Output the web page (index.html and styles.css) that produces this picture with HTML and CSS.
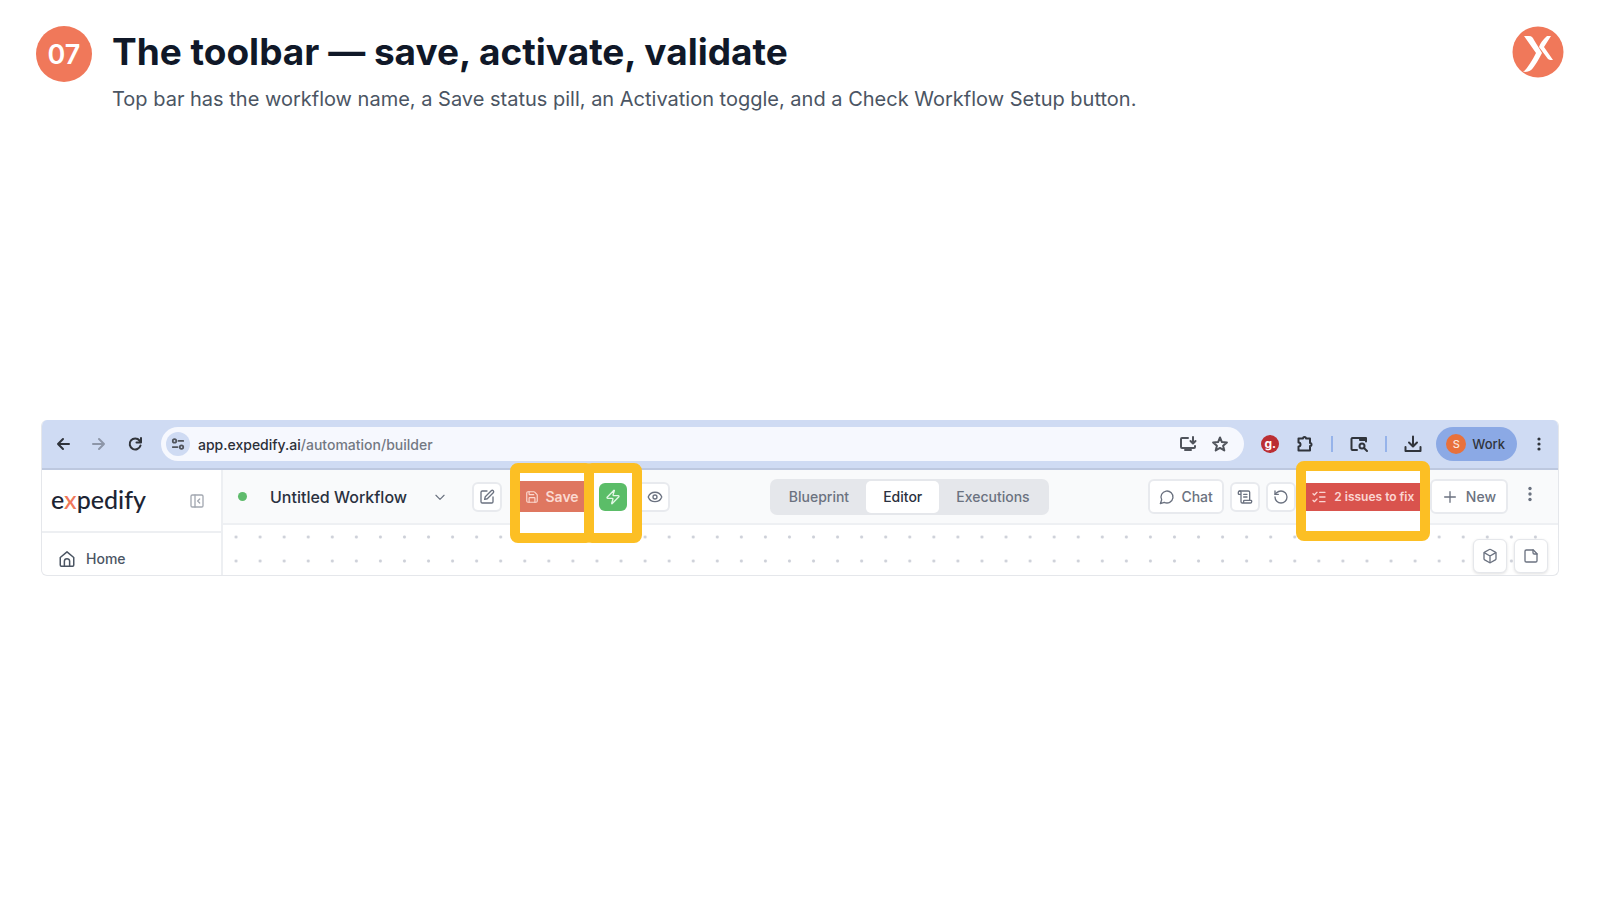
FILE: index.html
```html
<!DOCTYPE html>
<html lang="en">
<head>
  <meta charset="UTF-8">
  <meta name="viewport" content="width=device-width, initial-scale=1.0">
  <title>The toolbar — save, activate, validate</title>
  <link rel="stylesheet" href="styles.css">
</head>
<body>
  <div class="slide">
    <header class="slide-header">
      <div class="step">07</div>
      <div class="heading">
        <h1>The toolbar — save, activate, validate</h1>
        <p>Top bar has the workflow name, a Save status pill, an Activation toggle, and a Check Workflow Setup button.</p>
      </div>
      <svg class="brand" viewBox="0 0 52 52" role="img" aria-label="Expedify">
        <circle cx="26" cy="26" r="25.5" fill="#f0785a"/>
        <path d="M12 10h5c3 0 4 2 5 4l8 13c-3 6-6 11-9 15-2 3-5 4-10 4 4-3 9-11 13-19z" fill="#fff"/>
        <path d="M39 10h-4c-4 4-7 7-8 11l9 12c1 1 3 1 5 1l-9-13z" fill="#fff"/>
      </svg>
    </header>

    <main class="browser">
      <!-- Browser chrome -->
      <div class="chrome">
        <nav class="nav-buttons">
          <button aria-label="Back"><svg viewBox="0 0 16 16"><path d="M14 8H3M8 3L3 8l5 5"/></svg></button>
          <button class="muted" aria-label="Forward"><svg viewBox="0 0 16 16"><path d="M2 8h11M8 3l5 5-5 5"/></svg></button>
          <button aria-label="Reload"><svg viewBox="0 0 16 16"><path d="M13.500 9.500A5.500 5.500 0 1 1 12.500 4.500L13.500 6M14 2v4.500H9.500"/></svg></button>
        </nav>
        <div class="address">
          <button class="site-info" aria-label="Site information"><svg viewBox="0 0 16 16"><circle cx="4" cy="4.500" r="2"/><path d="M8.500 4.500H14M2 11.500h5.500"/><circle cx="12" cy="11.500" r="2"/></svg></button>
          <a class="url" href="#">app.expedify.ai<span>/automation/builder</span></a>
          <button aria-label="Install app"><svg viewBox="0 0 18 18"><path d="M9 3H3a1 1 0 0 0-1 1v8a1 1 0 0 0 1 1h12a1 1 0 0 0 1-1v-1M14 2v6M11.500 6l2.500 2.500L16.500 6"/><path d="M6 15h6"/></svg></button>
          <button aria-label="Bookmark"><svg viewBox="0 0 18 18"><path d="M9 2.500l1.900 4.600 5 .4-3.800 3.200 1.200 4.800L9 12.900l-4.300 2.600 1.200-4.800-3.800-3.200 5-.4z"/></svg></button>
        </div>
        <div class="extensions">
          <button class="ext-g" aria-label="g extension">g.</button>
          <button aria-label="Extensions"><svg viewBox="0 0 18 18"><path d="M2.500 3.500h4.500a1.500 1.500 0 0 1 3 0h4v4.500a1.500 1.500 0 0 1 0 3v4.500H2.500v-4a2 2 0 0 0 0-4z"/></svg></button>
          <span class="divider"></span>
          <button aria-label="Search tabs"><svg viewBox="0 0 18 18"><path d="M7 15H2.500a1 1 0 0 1-1-1V4a1 1 0 0 1 1-1H16v3.500M10 4h6"/><path d="M10 5h6"/><circle cx="12" cy="11" r="2.500"/><path d="M14 13l3 3"/></svg></button>
          <span class="divider"></span>
          <button aria-label="Downloads"><svg viewBox="0 0 18 18"><path d="M9 1.500v9.500M5 7.500l4 4 4-4M1.500 12v4h15v-4"/></svg></button>
        </div>
        <button class="profile"><span class="avatar">S</span>Work</button>
        <button class="kebab" aria-label="Browser menu"><svg viewBox="0 0 16 16"><circle cx="8" cy="3" r="1.600"/><circle cx="8" cy="8" r="1.600"/><circle cx="8" cy="13" r="1.600"/></svg></button>
      </div>

      <!-- App -->
      <div class="app">
        <aside class="sidebar">
          <div class="sidebar-top">
            <a class="logo" href="#">e<span>x</span>pedify</a>
            <button aria-label="Collapse sidebar"><svg viewBox="0 0 24 24"><rect x="3" y="3" width="18" height="18" rx="2"/><path d="M9 3v18M16 15l-3-3 3-3"/></svg></button>
          </div>
          <a class="menu-item" href="#">
            <svg viewBox="0 0 24 24"><path d="M3 10l9-7.500L21 10v10a1.500 1.500 0 0 1-1.500 1.500h-15A1.500 1.500 0 0 1 3 20z"/><path d="M8.500 21v-6a3.500 3.500 0 0 1 7 0v6"/></svg>
            Home
          </a>
        </aside>

        <section class="workspace">
          <div class="toolbar">
            <div class="group group-left">
              <span class="status"></span>
              <span class="name">Untitled Workflow</span>
              <button class="chevron" aria-label="Switch workflow"><svg viewBox="0 0 24 24"><path d="M5 9l7 7 7-7"/></svg></button>
              <button class="btn icon" aria-label="Rename"><svg viewBox="0 0 24 24"><path d="M12 3H5a2 2 0 0 0-2 2v14a2 2 0 0 0 2 2h14a2 2 0 0 0 2-2v-7"/><path d="M18.400 2.600a2.100 2.100 0 0 1 3 3L12.400 14.600l-4 1 1-4z"/></svg></button>
              <div class="highlight highlight-save">
                <button class="save"><svg viewBox="0 0 24 24"><path d="M15.200 3a2 2 0 0 1 1.400.6l3.800 3.800a2 2 0 0 1 .6 1.400V19a2 2 0 0 1-2 2H5a2 2 0 0 1-2-2V5a2 2 0 0 1 2-2z"/><path d="M17 21v-7a1 1 0 0 0-1-1H8a1 1 0 0 0-1 1v7M7 3v4a1 1 0 0 0 1 1h7"/></svg>Save</button>
              </div>
              <div class="highlight highlight-activate">
                <button class="activate" aria-label="Activate"><svg viewBox="0 0 24 24"><path d="M4 14a1 1 0 0 1-.8-1.600l9.900-10.200a.5.5 0 0 1 .9.500l-1.900 6A1 1 0 0 0 13 10h7a1 1 0 0 1 .8 1.600l-9.900 10.200a.5.5 0 0 1-.9-.5l1.900-6A1 1 0 0 0 11 14z"/></svg></button>
              </div>
              <button class="btn preview" aria-label="Preview"><svg viewBox="0 0 24 24"><path d="M2 12.300a1 1 0 0 1 0-.7 10.800 10.800 0 0 1 20 0 1 1 0 0 1 0 .7 10.800 10.800 0 0 1-20 0"/><circle cx="12" cy="12" r="3"/></svg></button>
            </div>

            <div class="tabs">
              <button>Blueprint</button>
              <button class="active">Editor</button>
              <button>Executions</button>
            </div>

            <div class="group group-right">
              <button class="btn labelled chat"><svg viewBox="0 0 24 24"><path d="M7.900 20A9 9 0 1 0 4 16.100L2 22z"/></svg>Chat</button>
              <button class="btn icon" aria-label="Logs"><svg viewBox="0 0 24 24"><path d="M15 12h-5M15 8h-5M19 17V5a2 2 0 0 0-2-2H4"/><path d="M8 21h12a2 2 0 0 0 2-2v-1a1 1 0 0 0-1-1H11a1 1 0 0 0-1 1v1a2 2 0 1 1-4 0V5a2 2 0 1 0-4 0v2a1 1 0 0 0 1 1h3"/></svg></button>
              <button class="btn icon" aria-label="History"><svg viewBox="0 0 24 24"><path d="M3 12a9 9 0 1 0 9-9 9.700 9.700 0 0 0-6.700 2.700L3 8"/><path d="M3 3v5h5"/></svg></button>
              <div class="highlight highlight-issues">
                <button class="issues"><svg viewBox="0 0 24 24"><path d="M13 5h8M13 12h8M13 19h8M3 17l2 2 4-4M3 7l2 2 4-4"/></svg>2 issues to fix</button>
              </div>
              <button class="btn labelled"><svg viewBox="0 0 24 24"><path d="M4 12h16M12 4v16"/></svg>New</button>
              <button class="kebab more" aria-label="More"><svg viewBox="0 0 16 16"><circle cx="8" cy="2.500" r="1.700"/><circle cx="8" cy="8" r="1.700"/><circle cx="8" cy="13.500" r="1.700"/></svg></button>
            </div>
          </div>

          <div class="canvas">
            <button class="tool" aria-label="Nodes"><svg viewBox="0 0 24 24"><path d="M21 8a2 2 0 0 0-1-1.700l-7-4a2 2 0 0 0-2 0l-7 4A2 2 0 0 0 3 8v8a2 2 0 0 0 1 1.700l7 4a2 2 0 0 0 2 0l7-4a2 2 0 0 0 1-1.700z"/><path d="M3.300 7l8.700 5 8.700-5M12 22V12"/></svg></button>
            <button class="tool" aria-label="Add note"><svg viewBox="0 0 24 24"><path d="M15.500 3H5a2 2 0 0 0-2 2v14a2 2 0 0 0 2 2h14a2 2 0 0 0 2-2V8.500z"/><path d="M15 3v4a2 2 0 0 0 2 2h4"/></svg></button>
          </div>
        </section>
      </div>
    </main>
  </div>
</body>
</html>
```

FILE: styles.css
```css
:root {
  --ink: #101828;
  --text: #4b5563;
  --icon: #6b7280;
  --border: #e5e7eb;
  --brand: #f0785a;
  --highlight: #fcbf24;
  --chrome: #cfdbf3;
}

* {
  box-sizing: border-box;
}

body {
  margin: 0;
  background: #fff;
  color: var(--ink);
  font-family: Inter, "Liberation Sans", sans-serif;
}

button {
  display: flex;
  align-items: center;
  justify-content: center;
  flex-shrink: 0;
  margin: 0;
  padding: 0;
  border: none;
  background: none;
  color: inherit;
  font: inherit;
  cursor: pointer;
}

a {
  color: inherit;
  text-decoration: none;
}

svg {
  display: block;
  flex-shrink: 0;
  width: 16px;
  height: 16px;
  fill: none;
  stroke: currentColor;
  stroke-width: 2;
  stroke-linecap: round;
  stroke-linejoin: round;
}

.slide {
  display: flex;
  flex-direction: column;
  min-height: 100vh;
  padding: 26px 36px 0;
}

/* Slide header */
.slide-header {
  display: flex;
  align-items: flex-start;
  gap: 20px;
}

.step {
  display: flex;
  align-items: center;
  justify-content: center;
  width: 56px;
  height: 56px;
  border-radius: 50%;
  background: var(--brand);
  color: #fff;
  font-size: 27px;
  font-weight: 600;
}

.heading {
  flex: 1;
}

.heading h1 {
  margin: 0;
  font-size: 37px;
  line-height: 52px;
  font-weight: 700;
}

.heading p {
  margin: 6px 0 0;
  color: var(--text);
  font-size: 20px;
  line-height: 30px;
}

.brand {
  width: 52px;
  height: 52px;
  stroke: none;
}

/* Browser window */
.browser {
  margin: 306px 5px 0;
  border: 1px solid var(--border);
  border-top: none;
  border-radius: 6px;
  overflow: hidden;
}

.chrome {
  display: flex;
  align-items: center;
  height: 50px;
  padding: 0 11px 0 13px;
  border-bottom: 2px solid #bdc8df;
  background: var(--chrome);
  color: #30343b;
}

.nav-buttons {
  display: flex;
  gap: 20px;
}

.nav-buttons .muted {
  color: #8d96a8;
}

.address {
  display: flex;
  align-items: center;
  flex: 1;
  gap: 14px;
  height: 34px;
  margin: 0 17px 0 18px;
  padding: 0 15px 0 5px;
  border-radius: 17px;
  background: #f6f8fe;
  color: #50545c;
}

.address svg,
.extensions svg {
  width: 18px;
  height: 18px;
}

.site-info {
  width: 24px;
  height: 24px;
  border-radius: 50%;
  background: var(--chrome);
}

.address .site-info svg {
  width: 14px;
  height: 14px;
}

.url {
  flex: 1;
  margin-left: -6px;
  color: #2b2f38;
  font-size: 14px;
  font-weight: 500;
}

.url span {
  color: #737883;
}

.extensions {
  display: flex;
  align-items: center;
  gap: 17px;
}

.ext-g {
  width: 18px;
  height: 18px;
  border-radius: 50%;
  background: #bb2e33;
  color: #fff;
  font-size: 12px;
  line-height: 12px;
  font-weight: 700;
}

.divider {
  width: 2px;
  height: 16px;
  background: #96b3ea;
}

.profile {
  gap: 6px;
  height: 34px;
  margin: 0 14px;
  padding: 0 12px 0 10px;
  border-radius: 17px;
  background: #8ba9e5;
  font-size: 13px;
  font-weight: 500;
}

.avatar {
  display: flex;
  align-items: center;
  justify-content: center;
  width: 20px;
  height: 20px;
  border-radius: 50%;
  background: #e8713c;
  color: #fbe6dc;
  font-size: 11px;
}

.kebab svg {
  fill: currentColor;
  stroke: none;
}

/* Sidebar */
.app {
  display: flex;
}

.sidebar {
  width: 181px;
  border-right: 2px solid #edeff2;
}

.sidebar-top {
  display: flex;
  align-items: center;
  justify-content: space-between;
  height: 63px;
  padding: 0 16px 0 9px;
  border-bottom: 2px solid #edeff2;
  color: #a3a8b1;
}

.logo {
  padding-bottom: 4px;
  color: #1c2433;
  font-family: Lato, sans-serif;
  font-size: 25px;
  font-weight: 500;
}

.logo span {
  color: var(--brand);
}

.menu-item {
  display: flex;
  align-items: center;
  gap: 10px;
  padding: 16px 16px 0;
  color: var(--text);
  font-size: 14px;
  line-height: 20px;
  font-weight: 500;
}

.menu-item svg {
  width: 18px;
  height: 18px;
}

/* Workflow toolbar */
.workspace {
  display: flex;
  flex-direction: column;
  flex: 1;
}

.toolbar {
  display: flex;
  align-items: center;
  justify-content: space-between;
  height: 55px;
  padding: 0 20px 0 15px;
  border-bottom: 2px solid #eef0f3;
  background: #f9fafb;
  color: var(--icon);
  font-size: 14px;
  font-weight: 500;
}

.group {
  display: flex;
  align-items: center;
}

.status {
  width: 9px;
  height: 9px;
  border-radius: 50%;
  background: #5fbb6c;
}

.name {
  margin-left: 23px;
  color: #2a3140;
  font-size: 16px;
}

.chevron {
  margin: 0 25px 0 26px;
}

.chevron svg {
  width: 14px;
  height: 14px;
}

.btn {
  height: 30px;
  border: 2px solid #e8eaee;
  border-radius: 6px;
  background: #fff;
}

.btn.icon {
  width: 30px;
}

.btn.labelled {
  gap: 8px;
  height: 35px;
  padding: 0 10px;
}

.btn.chat {
  gap: 6px;
  padding: 0 9px;
}

/* Callout frame, drawn around the control it wraps */
.highlight {
  position: relative;
  z-index: 1;
  display: flex;
  align-items: center;
  justify-content: center;
}

.highlight::before {
  content: "";
  position: absolute;
  z-index: -1;
  inset: -18px -10px -31px;
  border: 10px solid var(--highlight);
  border-radius: 8px;
  background: #fff;
}

.highlight-save {
  margin: 0 10px 0 18px;
}

.save {
  gap: 6px;
  width: 64px;
  height: 31px;
  background: #df7760;
  color: #fbd9d0;
  font-weight: 600;
}

.save svg {
  width: 14px;
  height: 14px;
}

.highlight-activate {
  width: 38px;
  height: 31px;
}

.activate {
  width: 28px;
  height: 28px;
  border-radius: 6px;
  background: #5bbd68;
  color: #e3f7e5;
}

.btn.preview {
  width: 38px;
  padding-left: 8px;
}

.tabs {
  display: flex;
  height: 36px;
  padding: 2px;
  border-radius: 7px;
  background: #e5e7eb;
}

.tabs button {
  padding: 0 17px;
  border-radius: 5px;
}

.tabs .active {
  background: #fff;
  color: #2a3140;
}

.group-right {
  gap: 6px;
}

.highlight-issues {
  margin: 0 4px;
}

.highlight-issues::before {
  inset: -22px -10px -30px;
}

.issues {
  gap: 7px;
  width: 114px;
  height: 28px;
  background: #d9534d;
  color: #fbd5d2;
  font-size: 12px;
  font-weight: 600;
}

.more {
  margin: -6px 0 0 8px;
}

/* Canvas */
.canvas {
  display: flex;
  justify-content: flex-end;
  gap: 7px;
  height: 50px;
  padding: 14px 10px 0 1px;
  background-image: radial-gradient(circle, #cdd0d8 1px, transparent 2px);
  background-origin: content-box;
  background-position: 0 10px;
  background-repeat: round repeat;
  background-size: 24px 24px;
}

.tool {
  width: 34px;
  height: 34px;
  border: 1px solid var(--border);
  border-radius: 6px;
  background: #fff;
  box-shadow: 0 1px 3px rgba(0, 0, 0, 0.12);
  color: var(--icon);
}
```
